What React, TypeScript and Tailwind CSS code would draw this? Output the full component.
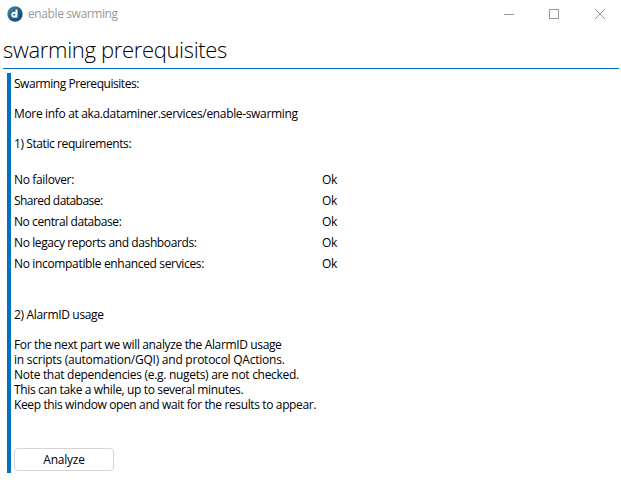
const rows = [
  { label: "No failover:", value: "Ok", tracking: "tracking-[-0.35px]" },
  { label: "Shared database:", value: "Ok", tracking: "tracking-[-0.55px]" },
  { label: "No central database:", value: "Ok", tracking: "tracking-[-0.42px]" },
  { label: "No legacy reports and dashboards:", value: "Ok", tracking: "tracking-[-0.39px]" },
  { label: "No incompatible enhanced services:", value: "Ok", tracking: "tracking-[-0.34px]" },
];

const notes = [
  { text: "For the next part we will analyze the AlarmID usage", tracking: "tracking-[-0.36px]" },
  { text: "in scripts (automation/GQI) and protocol QActions.", tracking: "tracking-[-0.24px]" },
  { text: "Note that dependencies (e.g. nugets) are not checked.", tracking: "tracking-[-0.3px]" },
  { text: "This can take a while, up to several minutes.", tracking: "tracking-[-0.36px]" },
  { text: "Keep this window open and wait for the results to appear.", tracking: "tracking-[-0.37px]" },
];

function AppLogo() {
  return (
    <svg width="16" height="16" viewBox="0 0 16 16">
      <defs>
        <linearGradient id="disc" x1="0" y1="0" x2="1" y2="1">
          <stop offset="0" stopColor="#4a8fae" />
          <stop offset="0.5" stopColor="#1c6388" />
          <stop offset="1" stopColor="#0d4468" />
        </linearGradient>
      </defs>
      <circle cx="8" cy="8" r="7.7" fill="url(#disc)" />
      <circle cx="7.2" cy="8.7" r="2" fill="none" stroke="#fff" strokeWidth="1.9" />
      <path d="M9.5 3.5V11.6" stroke="#fff" strokeWidth="2" />
    </svg>
  );
}

function TitleBar() {
  return (
    <header className="flex h-[27px] items-center pl-[7px]">
      <AppLogo />
      <span className="ml-[5px] grow text-[12px] leading-[16px] tracking-[-0.4px] text-[#999999]">enable swarming</span>
      <svg width="102" height="10" viewBox="0 0 102 10" className="mr-[15px]" fill="none" stroke="#999999" shapeRendering="crispEdges">
        <path d="M0 5.5H10M45.5 .5H54.5V9.5H45.5Z" />
        <path d="M91 0L101 10M101 0L91 10" shapeRendering="auto" />
      </svg>
    </header>
  );
}

export default function App() {
  return (
    <div className="h-[503px] w-[621px] overflow-hidden bg-white font-['Open_Sans','Noto_Sans',sans-serif] text-[12px] leading-[15px] whitespace-nowrap text-black">
      <TitleBar />
      <h1 className="mr-[2px] ml-[3px] h-[42px] border-b border-[#0072c6] pt-[7px] text-[22px] leading-[30px] font-light tracking-[-0.33px]">
        swarming prerequisites
      </h1>
      <main className="mt-[4px] ml-[7px] h-[400px] border-l-4 border-[#0072c6] pt-[3px] pl-[3px]">
        <p className="tracking-[-0.46px]">Swarming Prerequisites:</p>
        <p className="mt-[15px] tracking-[-0.34px]">More info at aka.dataminer.services/enable-swarming</p>
        <p className="mt-[15px] tracking-[-0.41px]">1) Static requirements:</p>
        <dl className="mt-[18px]">
          {rows.map((row) => (
            <div key={row.label} className="flex h-[21px] items-center">
              <dt className={`w-[308px] ${row.tracking}`}>{row.label}</dt>
              <dd className="tracking-[-0.4px]">{row.value}</dd>
            </div>
          ))}
        </dl>
        <p className="mt-[33px] tracking-[-0.33px]">2) AlarmID usage</p>
        <div className="mt-[15px]">
          {notes.map((note) => (
            <p key={note.text} className={note.tracking}>{note.text}</p>
          ))}
        </div>
        <button className="mt-[36px] flex h-[23px] w-[100px] items-center justify-center rounded-[4px] border border-[#d5d5d5] bg-white tracking-[-0.25px]">
          Analyze
        </button>
      </main>
    </div>
  );
}
